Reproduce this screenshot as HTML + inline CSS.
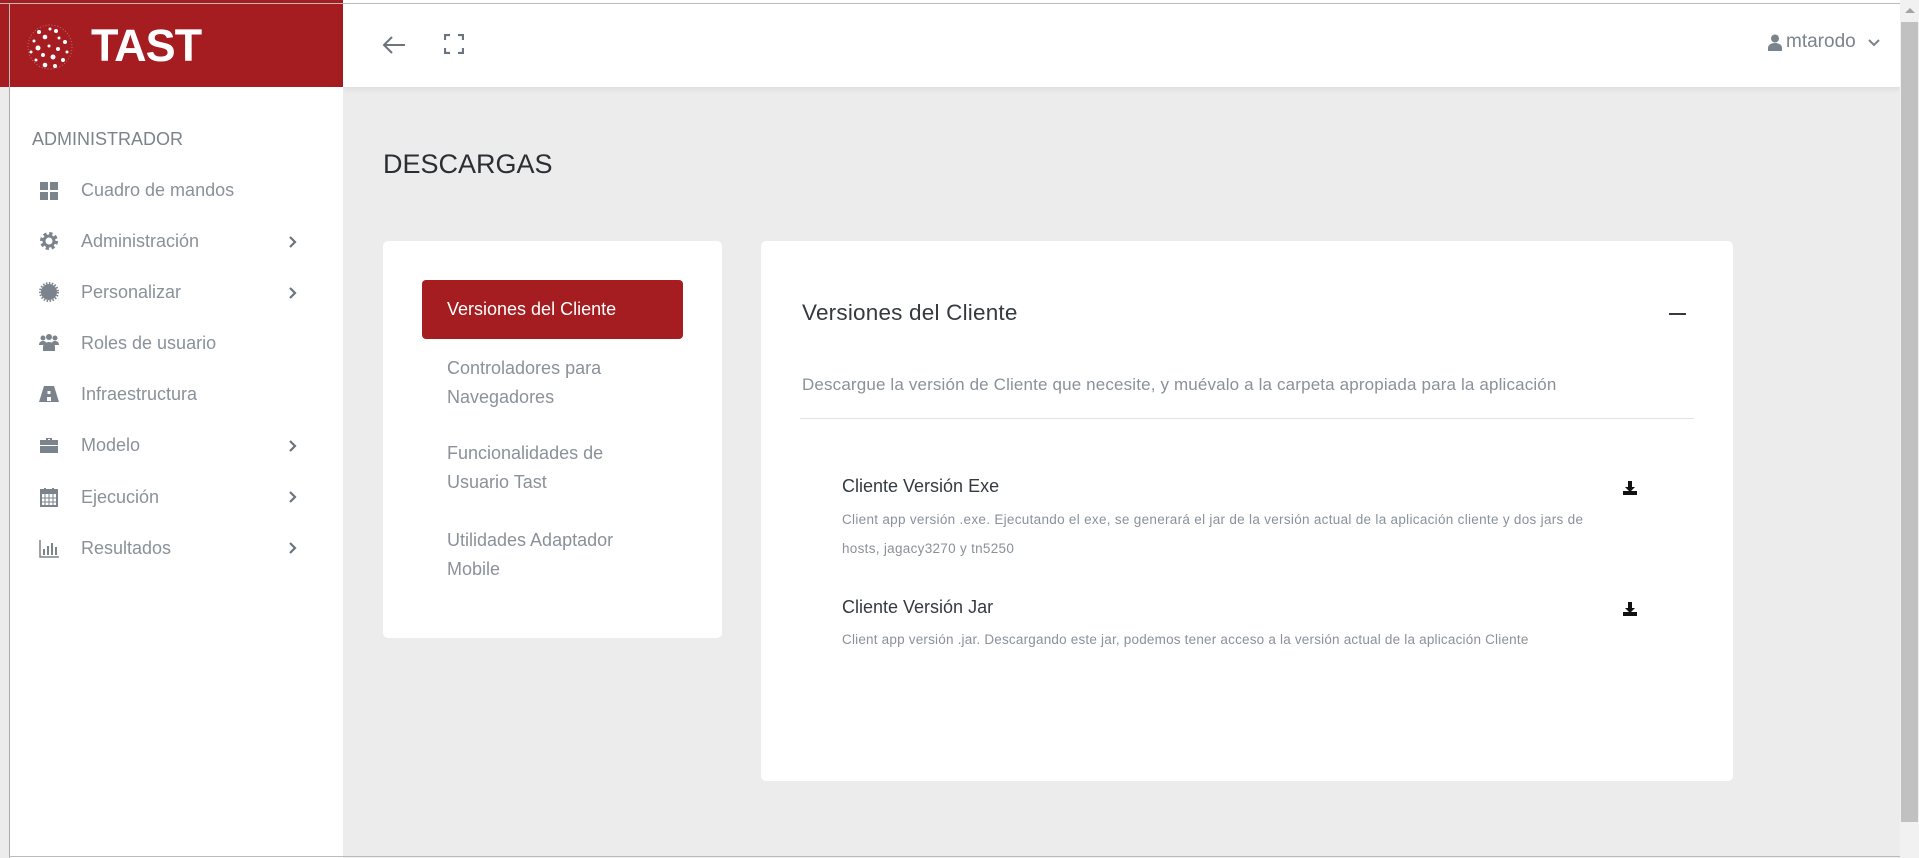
<!DOCTYPE html>
<html><head><meta charset="utf-8"><style>
*{margin:0;padding:0;box-sizing:border-box}
body{width:1919px;height:858px;overflow:hidden;background:#ececec;font-family:"Liberation Sans",sans-serif;position:relative}
.a{position:absolute}
.side{left:9px;top:87px;width:334px;height:771px;background:#fff;border-left:1px solid #aaa}
.nav{left:81px;font-size:18px;color:#8a919a;white-space:nowrap}
.ic{left:38px;width:22px;height:22px}
.card{background:#fff;border-radius:5px}
</style></head><body>
<div class="a" style="left:0;top:0;width:343px;height:87px;background:#a51d20"></div>
<div class="a" style="left:343px;top:0;width:1557px;height:87px;background:#fff;box-shadow:0 2px 6px rgba(0,0,0,.08)"></div>
<div class="a" style="left:0;top:3px;width:1900px;height:1px;background:#bbb"></div>
<div class="a" style="left:9px;top:3px;width:1px;height:855px;background:#bbb"></div>
<div class="a" style="left:1900px;top:0;width:19px;height:858px;background:#f1f1f1"></div>
<div class="a" style="left:1901px;top:22px;width:17px;height:800px;background:#c1c1c1"></div>
<div class="a" style="left:1905px;top:8px;width:0;height:0;border-left:5px solid transparent;border-right:5px solid transparent;border-bottom:5px solid #a3a3a3"></div>
<svg class="a" style="left:25px;top:22px" width="50" height="50" viewBox="0 0 50 50">
<g fill="#fff"><circle cx="25" cy="25" r="22" fill="none" stroke="rgba(255,255,255,.35)" stroke-width="1" stroke-dasharray="1 2"/>
<circle cx="14" cy="10" r="2"/><circle cx="25" cy="7" r="1.5"/><circle cx="31" cy="9" r="2"/><circle cx="20" cy="15" r="2.3"/><circle cx="34" cy="16" r="1.5"/><circle cx="40" cy="20" r="2"/><circle cx="9" cy="19" r="1.5"/><circle cx="13" cy="26" r="2.5"/><circle cx="24" cy="24" r="1.5"/><circle cx="33" cy="27" r="2"/><circle cx="42" cy="30" r="1.5"/><circle cx="6" cy="30" r="1.5"/><circle cx="18" cy="33" r="2"/><circle cx="28" cy="35" r="2.5"/><circle cx="38" cy="38" r="2"/><circle cx="11" cy="38" r="1.5"/><circle cx="20" cy="43" r="2.3"/><circle cx="30" cy="44" r="2"/></g></svg>
<div class="a" style="left:91px;top:20px;font-size:45px;font-weight:bold;color:#fff;letter-spacing:-1px">TAST</div>
<svg class="a" style="left:381px;top:35px" width="26" height="20" viewBox="0 0 26 20"><path d="M24 10H3M11 2L3 10l8 8" fill="none" stroke="#6c757d" stroke-width="2"/></svg>
<svg class="a" style="left:444px;top:34px" width="20" height="20" viewBox="0 0 20 20"><path d="M1 6V1h5M14 1h5v5M19 14v5h-5M6 19H1v-5" fill="none" stroke="#6c757d" stroke-width="2.2"/></svg>
<svg class="a" style="left:1768px;top:34px" width="14" height="17" viewBox="0 0 14 17"><circle cx="7" cy="4.5" r="4" fill="#7b838c"/><path d="M0 17v-3c0-3 3-5 7-5s7 2 7 5v3z" fill="#7b838c"/></svg>
<div class="a" style="left:1786px;top:31px;font-size:19px;color:#7b838c">mtarodo</div>
<svg class="a" style="left:1868px;top:39px" width="12" height="8" viewBox="0 0 12 8"><path d="M1 1l5 5 5-5" fill="none" stroke="#7b838c" stroke-width="2"/></svg>

<div class="a side"></div>
<div class="a" style="left:32px;top:129px;font-size:18px;color:#7b838c">ADMINISTRADOR</div>
<svg class="a ic" style="top:180px" viewBox="0 0 22 22"><g fill="#7b838c"><rect x="2" y="2" width="8" height="8"/><rect x="12" y="2" width="8" height="8"/><rect x="2" y="12" width="8" height="8"/><rect x="12" y="12" width="8" height="8"/></g></svg>
<div class="a nav" style="top:180px">Cuadro de mandos</div>
<svg class="a ic" style="top:230px" viewBox="0 0 22 22"><circle cx="11" cy="11" r="7" fill="none" stroke="#7b838c" stroke-width="4" stroke-dasharray="3 2.5"/><circle cx="11" cy="11" r="5" fill="none" stroke="#7b838c" stroke-width="3"/></svg>
<div class="a nav" style="top:231px">Administración</div>
<svg class="a ic" style="top:281px" viewBox="0 0 22 22"><circle cx="11" cy="11" r="8" fill="#7b838c"/><circle cx="11" cy="11" r="9" fill="none" stroke="#7b838c" stroke-width="2" stroke-dasharray="1.5 1.5"/></svg>
<div class="a nav" style="top:282px">Personalizar</div>
<svg class="a ic" style="top:332px" viewBox="0 0 22 22"><g fill="#7b838c"><circle cx="5" cy="6" r="2.5"/><circle cx="11" cy="5" r="3"/><circle cx="17" cy="6" r="2.5"/><path d="M1 13c0-3 2-4 4-4s3 1 3 2v2zM14 13v-2c0-1 1-2 3-2s4 1 4 4z"/><path d="M5 19v-4c0-3 3-5 6-5s6 2 6 5v4z"/></g></svg>
<div class="a nav" style="top:333px">Roles de usuario</div>
<svg class="a ic" style="top:383px" viewBox="0 0 22 22"><path d="M6 3h10l5 16H1z M9.5 8v3h3V8z M9 14v4h4v-4z" fill="#7b838c" fill-rule="evenodd"/></svg>
<div class="a nav" style="top:384px">Infraestructura</div>
<svg class="a ic" style="top:434px" viewBox="0 0 22 22"><path d="M8 4h6v2h6v13H2V6h6z M10 6h2V5h-2z" fill="#7b838c" fill-rule="evenodd"/><rect x="2" y="11" width="18" height="1" fill="#fff"/></svg>
<div class="a nav" style="top:435px">Modelo</div>
<svg class="a ic" style="top:486px" viewBox="0 0 22 22"><rect x="3" y="4" width="16" height="16" fill="none" stroke="#7b838c" stroke-width="2"/><rect x="3" y="4" width="16" height="4" fill="#7b838c"/><path d="M3 12h16M3 16h16M7 8v12M11 8v12M15 8v12" stroke="#7b838c" stroke-width="1"/><rect x="6" y="2" width="2" height="4" fill="#7b838c"/><rect x="14" y="2" width="2" height="4" fill="#7b838c"/></svg>
<div class="a nav" style="top:487px">Ejecución</div>
<svg class="a ic" style="top:537px" viewBox="0 0 22 22"><path d="M2 3v17h19" fill="none" stroke="#7b838c" stroke-width="1.5"/><g fill="#7b838c"><rect x="5" y="12" width="2" height="6"/><rect x="9" y="9" width="2" height="9"/><rect x="13" y="6" width="2" height="12"/><rect x="17" y="10" width="2" height="8"/></g></svg>
<div class="a nav" style="top:538px">Resultados</div>
<svg class="a" style="left:288px;top:235px" width="10" height="14" viewBox="0 0 10 14"><path d="M2 2l5 5-5 5" fill="none" stroke="#6c757d" stroke-width="2.2"/></svg>
<svg class="a" style="left:288px;top:286px" width="10" height="14" viewBox="0 0 10 14"><path d="M2 2l5 5-5 5" fill="none" stroke="#6c757d" stroke-width="2.2"/></svg>
<svg class="a" style="left:288px;top:439px" width="10" height="14" viewBox="0 0 10 14"><path d="M2 2l5 5-5 5" fill="none" stroke="#6c757d" stroke-width="2.2"/></svg>
<svg class="a" style="left:288px;top:490px" width="10" height="14" viewBox="0 0 10 14"><path d="M2 2l5 5-5 5" fill="none" stroke="#6c757d" stroke-width="2.2"/></svg>
<svg class="a" style="left:288px;top:541px" width="10" height="14" viewBox="0 0 10 14"><path d="M2 2l5 5-5 5" fill="none" stroke="#6c757d" stroke-width="2.2"/></svg>

<div class="a" style="left:383px;top:149px;font-size:27px;color:#2b2f33">DESCARGAS</div>

<div class="a card" style="left:383px;top:241px;width:339px;height:397px"></div>
<div class="a" style="left:422px;top:280px;width:261px;height:59px;background:#a51d20;border-radius:4px"></div>
<div class="a" style="left:447px;top:299px;font-size:18px;color:#fff">Versiones del Cliente</div>
<div class="a" style="left:447px;top:354px;font-size:18px;color:#8a919a;line-height:29px">Controladores para<br>Navegadores</div>
<div class="a" style="left:447px;top:439px;font-size:18px;color:#8a919a;line-height:29px">Funcionalidades de<br>Usuario Tast</div>
<div class="a" style="left:447px;top:526px;font-size:18px;color:#8a919a;line-height:29px">Utilidades Adaptador<br>Mobile</div>

<div class="a card" style="left:761px;top:241px;width:972px;height:540px"></div>
<div class="a" style="left:802px;top:300px;font-size:22.5px;color:#343a40;letter-spacing:0.2px">Versiones del Cliente</div>
<div class="a" style="left:1669px;top:313px;width:17px;height:2px;background:#343a40"></div>
<div class="a" style="left:802px;top:375px;font-size:17px;color:#8a919a;letter-spacing:0.15px">Descargue la versión de Cliente que necesite, y muévalo a la carpeta apropiada para la aplicación</div>
<div class="a" style="left:800px;top:418px;width:894px;height:1px;background:#e3e3e3"></div>

<div class="a" style="left:842px;top:476px;font-size:18px;color:#343a40">Cliente Versión Exe</div>
<div class="a" style="left:842px;top:505px;font-size:13.5px;color:#8a919a;line-height:29px;width:750px;letter-spacing:0.3px">Client app versión .exe. Ejecutando el exe, se generará el jar de la versión actual de la aplicación cliente y dos jars de<br>hosts, jagacy3270 y tn5250</div>
<div class="a" style="left:842px;top:597px;font-size:18px;color:#343a40">Cliente Versión Jar</div>
<div class="a" style="left:842px;top:632px;font-size:13.5px;color:#8a919a;letter-spacing:0.2px">Client app versión .jar. Descargando este jar, podemos tener acceso a la versión actual de la aplicación Cliente</div>
<svg class="a" style="left:1622px;top:480px" width="16" height="16" viewBox="0 0 16 16"><path d="M6 1h4v6h3l-5 5-5-5h3z" fill="#111"/><rect x="1" y="11" width="14" height="4" fill="#111"/></svg>
<svg class="a" style="left:1622px;top:601px" width="16" height="16" viewBox="0 0 16 16"><path d="M6 1h4v6h3l-5 5-5-5h3z" fill="#111"/><rect x="1" y="11" width="14" height="4" fill="#111"/></svg>
<div class="a" style="left:9px;top:856px;width:1891px;height:1px;background:#bbb"></div>
</body></html>
